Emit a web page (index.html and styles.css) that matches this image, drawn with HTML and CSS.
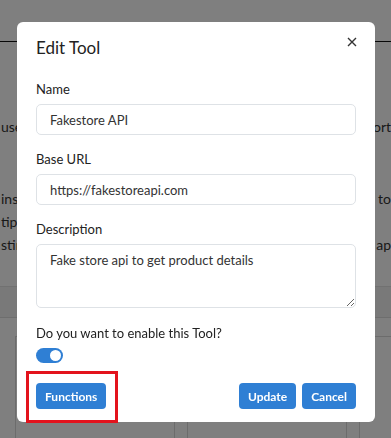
FILE: index.html
```html
<!DOCTYPE html>
<html lang="en">
<head>
    <meta charset="UTF-8">
    <meta name="viewport" content="width=device-width, initial-scale=1.0">
    <title>Edit Tool</title>
    <link rel="stylesheet" href="styles.css">
</head>
<body>
    <div class="page">
        <div class="topbar"></div>
        <div class="intro">
            <div class="line line-first"><span>use</span><span>ort</span></div>
            <div class="line line-gap"><span>ins</span><span>e to</span></div>
            <div class="line"><span>tip</span><span></span></div>
            <div class="line"><span>stir</span><span>n ap</span></div>
        </div>
        <div class="strip"></div>
        <div class="cards">
            <div class="card"></div>
            <div class="card"></div>
            <div class="card"></div>
        </div>
    </div>

    <div class="backdrop">
        <div class="modal">
            <div class="modal-header">
                <h5 class="modal-title">Edit Tool</h5>
                <button type="button" class="btn-close" aria-label="Close">
                    <svg width="10" height="10" viewBox="0 0 10 10">
                        <path d="M1 1 L9 9 M9 1 L1 9" stroke="#333" stroke-width="1.4" fill="none"/>
                    </svg>
                </button>
            </div>
            <div class="modal-body">
                <div class="field">
                    <label for="name">Name</label>
                    <input type="text" id="name" value="Fakestore API">
                </div>
                <div class="field">
                    <label for="baseUrl">Base URL</label>
                    <input type="text" id="baseUrl" value="https://fakestoreapi.com">
                </div>
                <div class="field">
                    <label for="description">Description</label>
                    <textarea id="description">Fake store api to get product details</textarea>
                </div>
                <div class="field field-switch">
                    <label>Do you want to enable this Tool?</label>
                    <span class="switch"><span class="knob"></span></span>
                </div>
            </div>
            <div class="modal-footer">
                <span class="highlight">
                    <button type="button" class="btn">Functions</button>
                </span>
                <div class="actions">
                    <button type="button" class="btn">Update</button>
                    <button type="button" class="btn">Cancel</button>
                </div>
            </div>
        </div>
    </div>
</body>
</html>
```

FILE: styles.css
```css
body {
    margin: 0;
    font-family: Lato, "Noto Sans", sans-serif;
    background-color: #fff;
    overflow: hidden;
}
.page {
    height: 438px;
    overflow: hidden;
}
.topbar {
    height: 41px;
    border-bottom: 1px solid #111;
}
.intro {
    font-size: 14px;
    color: #333;
}
.line {
    display: flex;
    justify-content: space-between;
    height: 23px;
    line-height: 23px;
}
.line-first {
    margin-top: 73px;
}
.line-gap {
    margin-top: 49px;
}
.line span:first-child {
    margin-left: 1px;
}
.strip {
    margin-top: 30px;
    height: 30px;
    background-color: #f2f2f2;
    border-top: 1px solid #e2e2e2;
    border-bottom: 1px solid #dcdcdc;
}
.cards {
    display: flex;
    gap: 12px;
    padding: 18px 0 0 15px;
    overflow: hidden;
}
.card {
    width: 158px;
    height: 120px;
    background-color: #fff;
    border: 1px solid #d8d8d8;
    flex-shrink: 0;
}
.backdrop {
    position: fixed;
    inset: 0;
    background-color: rgba(0, 0, 0, 0.5);
    padding: 22px 0 0 17px;
}
.modal {
    width: 358px;
    height: 400px;
    box-sizing: border-box;
    background-color: #fff;
    border-radius: 6px;
    padding: 0 19px;
    color: #222;
}
.modal-header {
    display: flex;
    justify-content: space-between;
    align-items: flex-start;
    padding-top: 14px;
}
.modal-title {
    margin: 0;
    font-size: 17px;
    font-weight: 400;
    line-height: 24px;
    color: #222;
}
.btn-close {
    border: none;
    background: none;
    padding: 0;
    margin: 1px -1px 0 0;
    width: 10px;
    height: 10px;
    display: flex;
}
.modal-body {
    padding-top: 19px;
}
.field {
    margin-bottom: 14px;
}
label {
    display: block;
    font-size: 13px;
    line-height: 20px;
    margin-bottom: 5px;
    color: #222;
}
input,
textarea {
    display: block;
    width: 100%;
    box-sizing: border-box;
    border: 1px solid #dee2e6;
    border-radius: 5px;
    font-family: inherit;
    font-size: 13px;
    color: #333;
    padding: 0 13px;
}
input {
    height: 31px;
}
textarea {
    height: 64px;
    padding-top: 7px;
    resize: vertical;
}
.field-switch {
    margin-top: 15px;
    margin-bottom: 0;
}
.field-switch label {
    margin-bottom: 5px;
}
.switch {
    display: flex;
    justify-content: flex-end;
    align-items: center;
    width: 27px;
    height: 15px;
    box-sizing: border-box;
    padding-right: 2px;
    border-radius: 8px;
    background-color: #2f7fd4;
}
.knob {
    width: 11px;
    height: 11px;
    border-radius: 50%;
    background-color: #fff;
}
.modal-footer {
    display: flex;
    justify-content: space-between;
    margin-top: 20px;
}
.highlight {
    position: relative;
    display: flex;
}
.highlight::after {
    content: "";
    position: absolute;
    top: -12px;
    left: -10px;
    right: -12px;
    bottom: -14px;
    border: 3px solid #e3131d;
}
.actions {
    display: flex;
    gap: 6px;
}
.btn {
    height: 26px;
    padding: 0 9px;
    border: none;
    border-radius: 4px;
    background-color: #2f7fd4;
    color: #fff;
    font-family: inherit;
    font-size: 12px;
    font-weight: 700;
    cursor: pointer;
}
```
